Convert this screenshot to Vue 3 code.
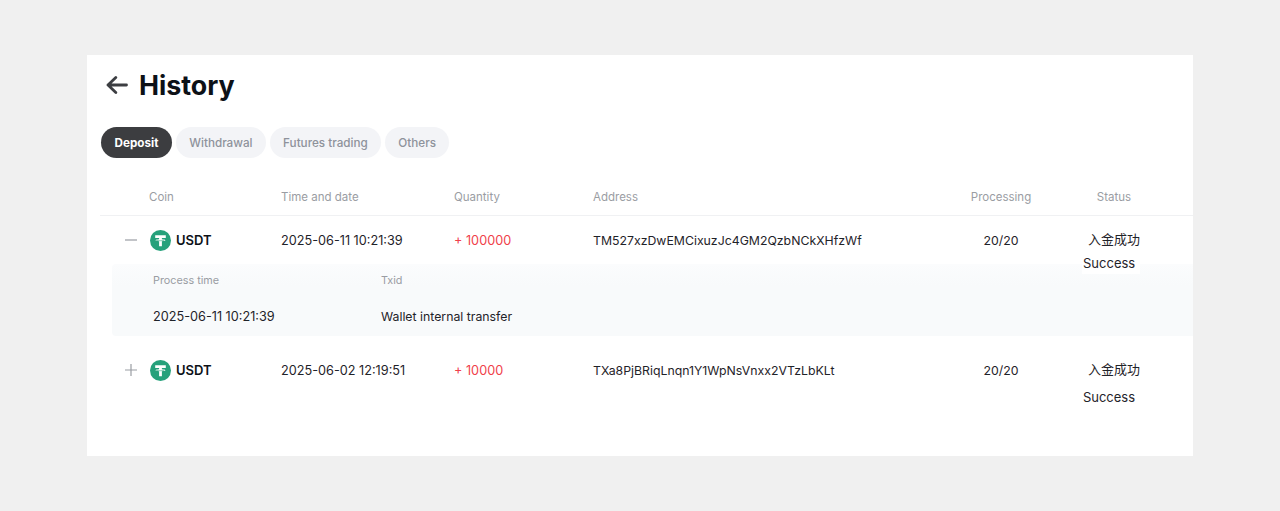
<script setup>
const tabs = ['Deposit', 'Withdrawal', 'Futures trading', 'Others']
</script>

<template>
  <div class="page">
    <main class="card">
      <header class="title">
        <svg class="back" viewBox="0 0 22 18" width="22" height="18" fill="none" stroke="#3c3e42" stroke-width="2.8" stroke-linecap="round" stroke-linejoin="round">
          <path d="M20.500 9H2M9.800 1.500 2 9l7.800 7.500" />
        </svg>
        <h1>History</h1>
      </header>

      <nav class="tabs">
        <button v-for="(t, i) in tabs" :key="t" class="tab" :class="{ active: i === 0 }">{{ t }}</button>
      </nav>

      <div class="row head">
        <span></span>
        <span>Coin</span>
        <span>Time and date</span>
        <span>Quantity</span>
        <span>Address</span>
        <span class="center">Processing</span>
        <span class="center">Status</span>
      </div>

      <div class="row item">
        <span class="toggle"><svg viewBox="0 0 12 12" width="12" height="12"><path d="M0 6h12" stroke="#9a9da3" stroke-width="1.2" /></svg></span>
        <span class="coin">
          <svg class="logo" viewBox="0 0 21 21" width="21" height="21">
            <circle cx="10.5" cy="10.5" r="10.5" fill="#26a17b" />
            <path d="M5.2 5.3h10.6v2.6h-3.9v1.3c2 .1 3.6.5 3.6 1s-1.6.9-3.6 1v5.1H9.1v-5.1c-2-.1-3.6-.5-3.6-1s1.6-.9 3.6-1V7.9H5.2z" fill="#fff" />
            <path d="M6.600 10.200c.6.3 2.100.5 3.900.5s3.300-.2 3.900-.5" fill="none" stroke="#26a17b" stroke-width=".6" />
          </svg>
          USDT
        </span>
        <span class="num">2025-06-11 10:21:39</span>
        <span class="num qty">+ 100000</span>
        <span>TM527xzDwEMCixuzJc4GM2QzbNCkXHfzWf</span>
        <span class="center">20/20</span>
        <span class="center status">入金成功<em class="success first">Success</em></span>
      </div>

      <section class="detail">
        <div class="detail-col time">
          <span class="label">Process time</span>
          <span class="num">2025-06-11 10:21:39</span>
        </div>
        <div class="detail-col">
          <span class="label">Txid</span>
          <span>Wallet internal transfer</span>
        </div>
      </section>

      <div class="row item second">
        <span class="toggle"><svg viewBox="0 0 12 12" width="12" height="12"><path d="M0 6h12M6 0v12" stroke="#9a9da3" stroke-width="1.2" /></svg></span>
        <span class="coin">
          <svg class="logo" viewBox="0 0 21 21" width="21" height="21">
            <circle cx="10.5" cy="10.5" r="10.5" fill="#26a17b" />
            <path d="M5.2 5.3h10.6v2.6h-3.9v1.3c2 .1 3.6.5 3.6 1s-1.6.9-3.6 1v5.1H9.1v-5.1c-2-.1-3.6-.5-3.6-1s1.6-.9 3.6-1V7.9H5.2z" fill="#fff" />
            <path d="M6.600 10.200c.6.3 2.100.5 3.900.5s3.300-.2 3.900-.5" fill="none" stroke="#26a17b" stroke-width=".6" />
          </svg>
          USDT
        </span>
        <span class="num">2025-06-02 12:19:51</span>
        <span class="num qty">+ 10000</span>
        <span>TXa8PjBRiqLnqn1Y1WpNsVnxx2VTzLbKLt</span>
        <span class="center">20/20</span>
        <span class="center status">入金成功<em class="success">Success</em></span>
      </div>
    </main>
  </div>
</template>

<style scoped>
.page {
  height: 511px;
  box-sizing: border-box;
  padding: 55px 87px;
  background: #f0f0f0;
  font-family: Inter, "Noto Sans CJK SC", sans-serif;
  color: #1f2329;
  overflow: hidden;
}
.card {
  height: 401px;
  padding: 0 0 0 13px;
  background: #fff;
  box-sizing: border-box;
}
.title {
  display: flex;
  align-items: center;
  height: 60px;
  padding-left: 5.500px;
  gap: 11.500px;
}
.back { flex: none; }
h1 {
  margin: 0;
  font-size: 26.800px;
  font-weight: 700;
  color: #0d1117;
  line-height: 60px;
}
.tabs {
  display: flex;
  gap: 4px;
  margin-top: 12px;
  padding-left: 1px;
}
.tab {
  height: 31px;
  padding: 0 13.300px;
  border: 0;
  border-radius: 16px;
  background: #f3f4f7;
  color: #8e929b;
  font: 500 11.700px Inter, sans-serif;
}
.tab.active {
  background: #3c3d40;
  color: #fff;
  font-weight: 700;
  padding: 0 13.500px;
}
.row {
  display: grid;
  grid-template-columns: 49px 132px 173px 139px 357px 102px 124px 17px;
  align-items: center;
  font-size: 12.300px;
}
.head {
  margin-top: 21px;
  height: 36px;
  color: #9a9da3;
  font-size: 11.500px;
  border-bottom: 1px solid #f0f1f3;
}
.item { height: 48px; }
.center { text-align: center; }
.num { font-size: 12.700px; }
.toggle { display: flex; padding-left: 25px; }
.coin {
  display: flex;
  align-items: center;
  gap: 5px;
  padding-left: 1px;
  font-size: 13px;
  font-weight: 600;
  color: #0d1117;
}
.qty { color: #f0414a; }
.status { position: relative; font-size: 13px; line-height: 16px; top: -1px; }
.success {
  position: absolute;
  left: 0;
  top: 28px;
  width: 114px;
  font-style: normal;
  text-align: center;
}
.success.first {
  top: 24px;
  left: 30px;
  width: 57px;
  padding: 0 0 3px 1px;
  text-align: left;
  background: #fff;
}
.detail {
  display: flex;
  height: 72px;
  margin-left: 12px;
  background: linear-gradient(#fbfcfd, #f8fafb 30%);
  border-radius: 4px 0 0 4px;
  font-size: 12.300px;
}
.detail-col {
  display: flex;
  flex-direction: column;
  padding-top: 10px;
  gap: 21px;
}
.time { width: 228px; padding-left: 41px; }
.label { color: #9a9da3; font-size: 10.800px; line-height: 14px; }
.second { margin-top: 10px; }
</style>
